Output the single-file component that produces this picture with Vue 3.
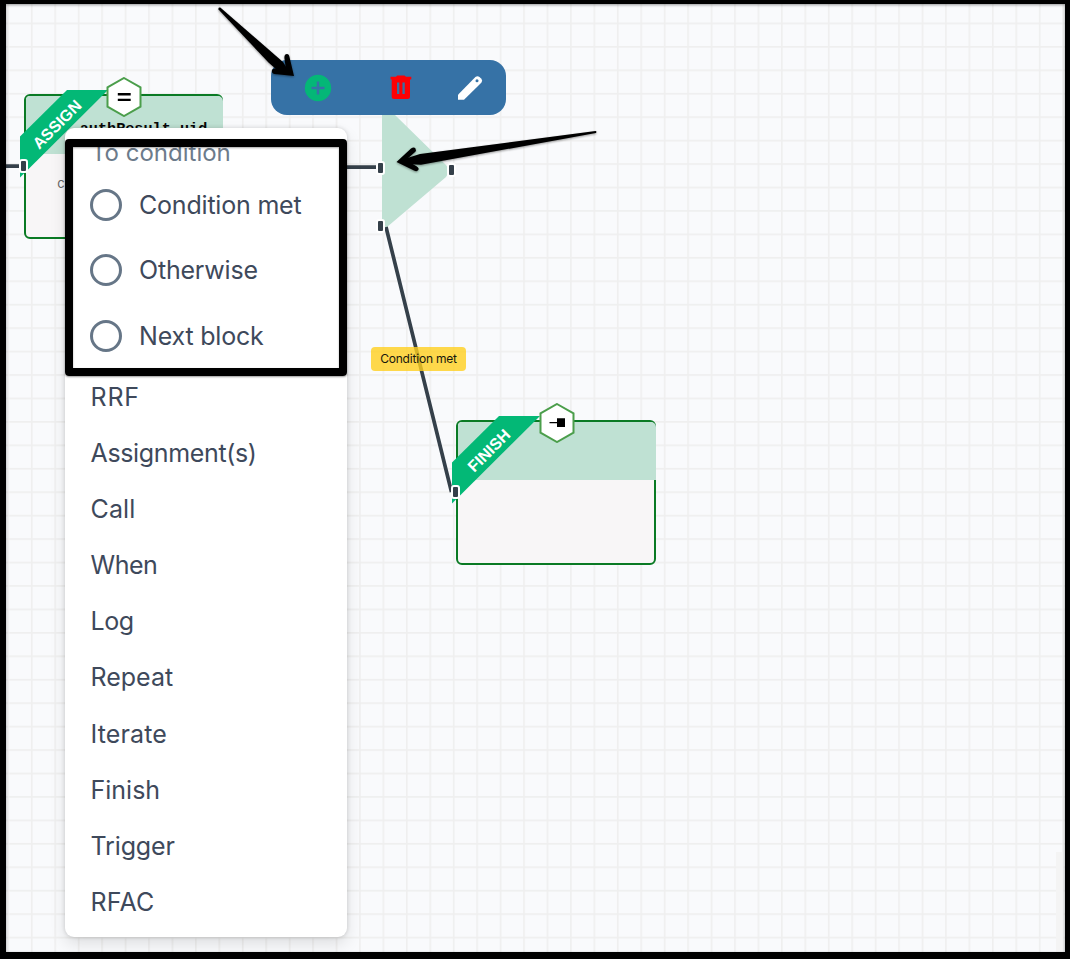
<script setup>
const targets = [
  { label: 'Condition met', cls: 't-met' },
  { label: 'Otherwise', cls: 't-other' },
  { label: 'Next block', cls: 't-next' }
]
const blocks = ['RRF', 'Assignment(s)', 'Call', 'When', 'Log', 'Repeat', 'Iterate', 'Finish', 'Trigger', 'RFAC']
const nodes = [
  { id: 'assign', label: 'ASSIGN' },
  { id: 'finish', label: 'FINISH' }
]
const ports = ['in', 'condition', 'output', 'otherwise', 'end']
</script>

<template>
  <main class="frame">
    <div class="canvas">
      <svg class="layer" viewBox="0 0 1070 959">
        <defs>
          <pattern id="grid" x="8.3" y="-0.1" width="23.44" height="23.44" patternUnits="userSpaceOnUse">
            <path d="M0 .8H23.44M.8 0V23.44" stroke="#efefef" stroke-width="1.7" />
          </pattern>
        </defs>
        <rect x="0" y="0" width="1072" height="961" fill="url(#grid)" transform="translate(-.8 -.8)" />
        <rect x="1056" y="852" width="7" height="100" fill="#f4f4f4" />
        <path d="M382 100H384Q391 110 395 115L446 165Q451 170 446 177L387 227Q384 229 382 229Z" fill="#bfe1d3" />
      </svg>

      <section v-for="node in nodes" :key="node.id" class="node" :class="node.id">
        <header class="node-head"><code v-if="node.id === 'assign'">authResult.uid</code></header>
        <div class="node-body"><span v-if="node.id === 'assign'">c</span></div>
        <svg class="ribbon" viewBox="0 0 90 90">
          <path d="M47 0H88L0 87.500V46.500Z" fill="#03b876" />
          <text x="37" y="40" transform="rotate(-45 37 34.5)" text-anchor="middle">{{ node.label }}</text>
        </svg>
        <svg class="hex" viewBox="0 0 36 40">
          <path d="M18 1L34.500 10.300V29.600L18 39L1.500 29.600V10.300Z" fill="#fff" stroke="#4b9e4b" stroke-width="2" />
          <path v-if="node.id === 'assign'" d="M11.800 17.300H24.700M11.800 22.900H24.700" stroke="#000" stroke-width="2.400" />
          <path v-else d="M10.500 19H18V15.300H26V24H18V20.200H10.500Z" fill="#000" />
        </svg>
      </section>

      <svg class="layer" viewBox="0 0 1070 959">
        <g stroke="#35404a" stroke-width="3.700" fill="none">
          <path d="M6 166.200H20M340 167.200H377M386 227L451.500 492" />
        </g>
      </svg>
      <i v-for="port in ports" :key="port" class="port" :class="port"></i>
      <span class="edge-label">Condition met</span>

      <nav class="toolbar">
        <svg class="tool-add" viewBox="0 0 28 28">
          <circle cx="14" cy="14" r="13.200" fill="#04b777" />
          <path d="M7.500 14H20.500M14 7.500V20.500" stroke="#3672a6" stroke-width="2.500" />
        </svg>
        <svg class="tool-delete" viewBox="0 0 22 25">
          <path d="M.5 1.800H6L7.300.5H14.500L16 1.800H21.300V4.500H.5ZM1.700 4.400H20V21.500Q20 24 17.500 24H4.200Q1.700 24 1.700 21.500Z" fill="#fd0004" />
          <path d="M8.200 7.500V19M13.600 7.500V19" stroke="#3672a6" stroke-width="2.300" />
        </svg>
        <svg class="tool-edit" viewBox="0 0 26 26">
          <path d="M1 19.800L18.400 2Q20.500.3 22.500 2L24.400 3.800Q26 5.700 24.300 7.700L7 24.800H1Z" fill="#fff" />
          <circle cx="20" cy="5.800" r="1.500" fill="#3672a6" />
        </svg>
      </nav>
    </div>

    <aside class="menu">
      <h2>To condition</h2>
      <label v-for="target in targets" :key="target.label" class="target" :class="target.cls">
        <span class="radio"></span><span>{{ target.label }}</span>
      </label>
      <ul>
        <li v-for="block in blocks" :key="block" :class="'b-' + block.slice(0, 3).toLowerCase()">{{ block }}</li>
      </ul>
      <div class="highlight"></div>
    </aside>

    <svg class="layer arrows" viewBox="0 0 1070 959">
      <path d="M220.300 7.500L283 62L290 73L277 70L268.500 62.500L218.500 9.500Q218 7 220.300 7.500Z" />
      <path d="M294 76L277 74.300Q272 74.500 271.800 71Q272 68 276 68.500L286 69.500L284.400 58Q284.200 54.200 287 54Q289 54 289.500 57Z" />
      <path d="M595.500 131L420 154L404 159V164L421 164.700L596 133Q597 131 595.500 131Z" />
      <path d="M396.500 162L411 148.500Q414 146.300 415.500 148.500Q416.800 150.500 414.500 152.500L406 160L416.500 166.200Q419.500 168 418.300 170Q417 172 414 170.500Z" />
    </svg>
    <div class="edge-shadow"></div>
  </main>
</template>

<style>
body { margin: 0; background: #000; }
</style>

<style scoped>
.frame { position: relative; width: 1070px; height: 959px; overflow: hidden; background: #f9fafc; font-family: Inter, "Liberation Sans", sans-serif; }
.canvas { position: absolute; inset: 0; }
.layer { position: absolute; inset: 0; width: 1070px; height: 959px; pointer-events: none; }
.node { position: absolute; box-sizing: border-box; width: 199.500px; height: 145.500px; border: 2px solid #0a7a24; border-radius: 6px; background: #f8f6f7; }
.assign { left: 23.700px; top: 93.800px; }
.finish { left: 456.200px; top: 419.500px; }
.node-head { height: 58.500px; margin-right: -2px; border-radius: 4px 5px 0 0; background: #bfe1d3; box-sizing: border-box; padding: 24.500px 0 0 54px; }
.node-head code { display: block; font: bold 15.200px/18px "Liberation Mono", monospace; color: #080808; }
.node-body { padding: 20px 0 0 31.500px; font-size: 13px; line-height: 18px; color: #666; }
.ribbon { position: absolute; left: -6px; top: -6px; width: 90px; height: 90px; overflow: visible; }
.ribbon text { fill: #fff; font: bold 16px "Liberation Sans", sans-serif; }
.hex { position: absolute; left: 80.500px; top: -18.500px; width: 36px; height: 40px; }
.port { position: absolute; box-sizing: border-box; width: 9px; height: 14px; border: 2px solid #fff; border-radius: 3px; background: #35404a; }
.in { left: 19px; top: 159px; }
.condition { left: 376px; top: 160.500px; }
.output { left: 447px; top: 163px; }
.otherwise { left: 376px; top: 219px; }
.end { left: 451px; top: 485px; }
.edge-label { position: absolute; left: 371px; top: 347px; width: 95px; height: 24px; border-radius: 4px; background: rgba(255, 208, 30, .8); color: #17170d; font-size: 12px; line-height: 24px; text-align: center; letter-spacing: -.2px; }
.toolbar { position: absolute; left: 271px; top: 60px; width: 235px; height: 55px; border-radius: 16px; background: #3672a6; display: flex; align-items: center; box-sizing: border-box; padding-left: 33px; }
.tool-add { width: 28px; height: 28px; }
.tool-delete { width: 22px; height: 25px; margin-left: 57.500px; }
.tool-edit { width: 26px; height: 26px; margin-left: 45px; }
.menu { position: absolute; left: 65px; top: 128px; width: 282px; height: 809px; box-sizing: border-box; border-radius: 9px; background: #fff; box-shadow: 0 7px 16px rgba(0, 0, 0, .11), 0 0 4px rgba(0, 0, 0, .16); color: #3e495b; font-size: 25px; display: flex; flex-direction: column; }
.menu h2 { margin: 0; height: 44px; padding-left: 26px; line-height: 50px; font-size: 24px; font-weight: 400; color: #6c7b8b; letter-spacing: 0; flex: none; }
.target { display: flex; align-items: center; gap: 17px; height: 65.500px; padding-left: 25px; letter-spacing: -.2px; flex: none; }
.radio { box-sizing: border-box; width: 32px; height: 32px; border: 3px solid #667687; border-radius: 50%; }
.menu ul { list-style: none; margin: 0; padding: 0 0 0 25.500px; }
.menu li { height: 56.200px; line-height: 56.500px; }
.b-rrf { letter-spacing: .8px; }
.b-ass { letter-spacing: -.35px; }
.b-cal, .b-ite, .b-rfa { letter-spacing: .15px; }
.b-whe { letter-spacing: -.5px; }
.b-log { letter-spacing: -.4px; }
.b-tri { letter-spacing: -.15px; }
.highlight { position: absolute; left: 0; top: 11px; box-sizing: border-box; width: 282px; height: 237px; border: 8px solid #000; border-radius: 4px; box-shadow: 0 1px 2px rgba(0, 0, 0, .4), inset 0 1px 2px rgba(0, 0, 0, .35); }
.arrows { filter: drop-shadow(0 1px 1px rgba(0, 0, 0, .4)); }
.edge-shadow { position: absolute; inset: 0; box-sizing: border-box; border: solid #000; border-width: 4px 5px 7px 6px; box-shadow: inset 0 1px 3px rgba(0, 0, 0, .4); }
</style>
